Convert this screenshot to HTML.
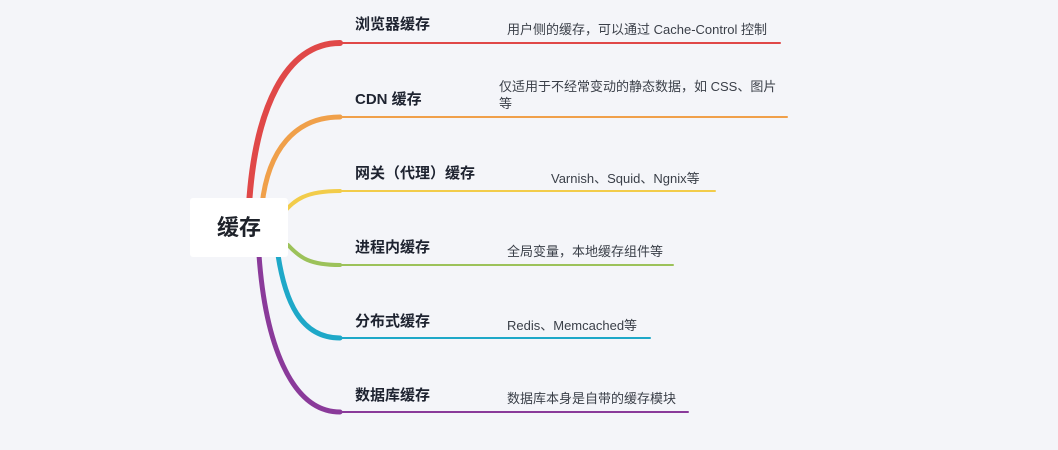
<!DOCTYPE html>
<html><head><meta charset="utf-8"><style>
body{margin:0;width:1058px;height:450px;background:#f4f5f9;overflow:hidden;position:relative;font-family:"Liberation Sans","Noto Sans CJK SC",sans-serif}
.t{position:absolute;font-size:15px;color:#1e2330;white-space:nowrap;font-weight:bold}
.s{position:absolute;font-size:13px;color:#3a3f48;white-space:nowrap;line-height:17px}
.c{position:absolute;left:190px;top:198px;width:98px;height:59px;background:#fff;border-radius:3px;font-size:22px;font-weight:bold;color:#1e222a;text-align:center;line-height:59px}
</style></head><body>
<svg width="1058" height="450" style="position:absolute;left:0;top:0" fill="none" stroke-linecap="round">
<path d="M249,205 C255,110 285,43 340,43" stroke="#e04848" stroke-width="6"/>
<line x1="338" y1="43" x2="780" y2="43" stroke="#e04848" stroke-width="2"/>
<path d="M262,205 C268,150 295,117 340,117" stroke="#f0a04a" stroke-width="5"/>
<line x1="338" y1="117" x2="787" y2="117" stroke="#f0a04a" stroke-width="2"/>
<path d="M284,212 C295,200 305,191 340,191" stroke="#f2cc4a" stroke-width="4"/>
<line x1="338" y1="191" x2="715" y2="191" stroke="#f2cc4a" stroke-width="2"/>
<path d="M288,245 C300,258 310,265 340,265" stroke="#9cc25a" stroke-width="4"/>
<line x1="338" y1="265" x2="673" y2="265" stroke="#9cc25a" stroke-width="2"/>
<path d="M278,255 C285,300 300,338 340,338" stroke="#1ea8c8" stroke-width="5"/>
<line x1="338" y1="338" x2="650" y2="338" stroke="#1ea8c8" stroke-width="2"/>
<path d="M259,255 C265,340 290,412 340,412" stroke="#8a3a9a" stroke-width="5"/>
<line x1="338" y1="412" x2="688" y2="412" stroke="#8a3a9a" stroke-width="2"/>
</svg>
<div class="c">缓存</div>
<div class="t" style="left:355px;top:13px">浏览器缓存</div>
<div class="t" style="left:355px;top:88px">CDN 缓存</div>
<div class="t" style="left:355px;top:162px">网关（代理）缓存</div>
<div class="t" style="left:355px;top:236px">进程内缓存</div>
<div class="t" style="left:355px;top:310px">分布式缓存</div>
<div class="t" style="left:355px;top:384px">数据库缓存</div>
<div class="s" style="left:507px;top:21px">用户侧的缓存，可以通过 Cache-Control 控制</div>
<div class="s" style="left:499px;top:78px">仅适用于不经常变动的静态数据，如 CSS、图片<br>等</div>
<div class="s" style="left:551px;top:170px">Varnish、Squid、Ngnix等</div>
<div class="s" style="left:507px;top:243px">全局变量，本地缓存组件等</div>
<div class="s" style="left:507px;top:317px">Redis、Memcached等</div>
<div class="s" style="left:507px;top:390px">数据库本身是自带的缓存模块</div>
</body></html>
